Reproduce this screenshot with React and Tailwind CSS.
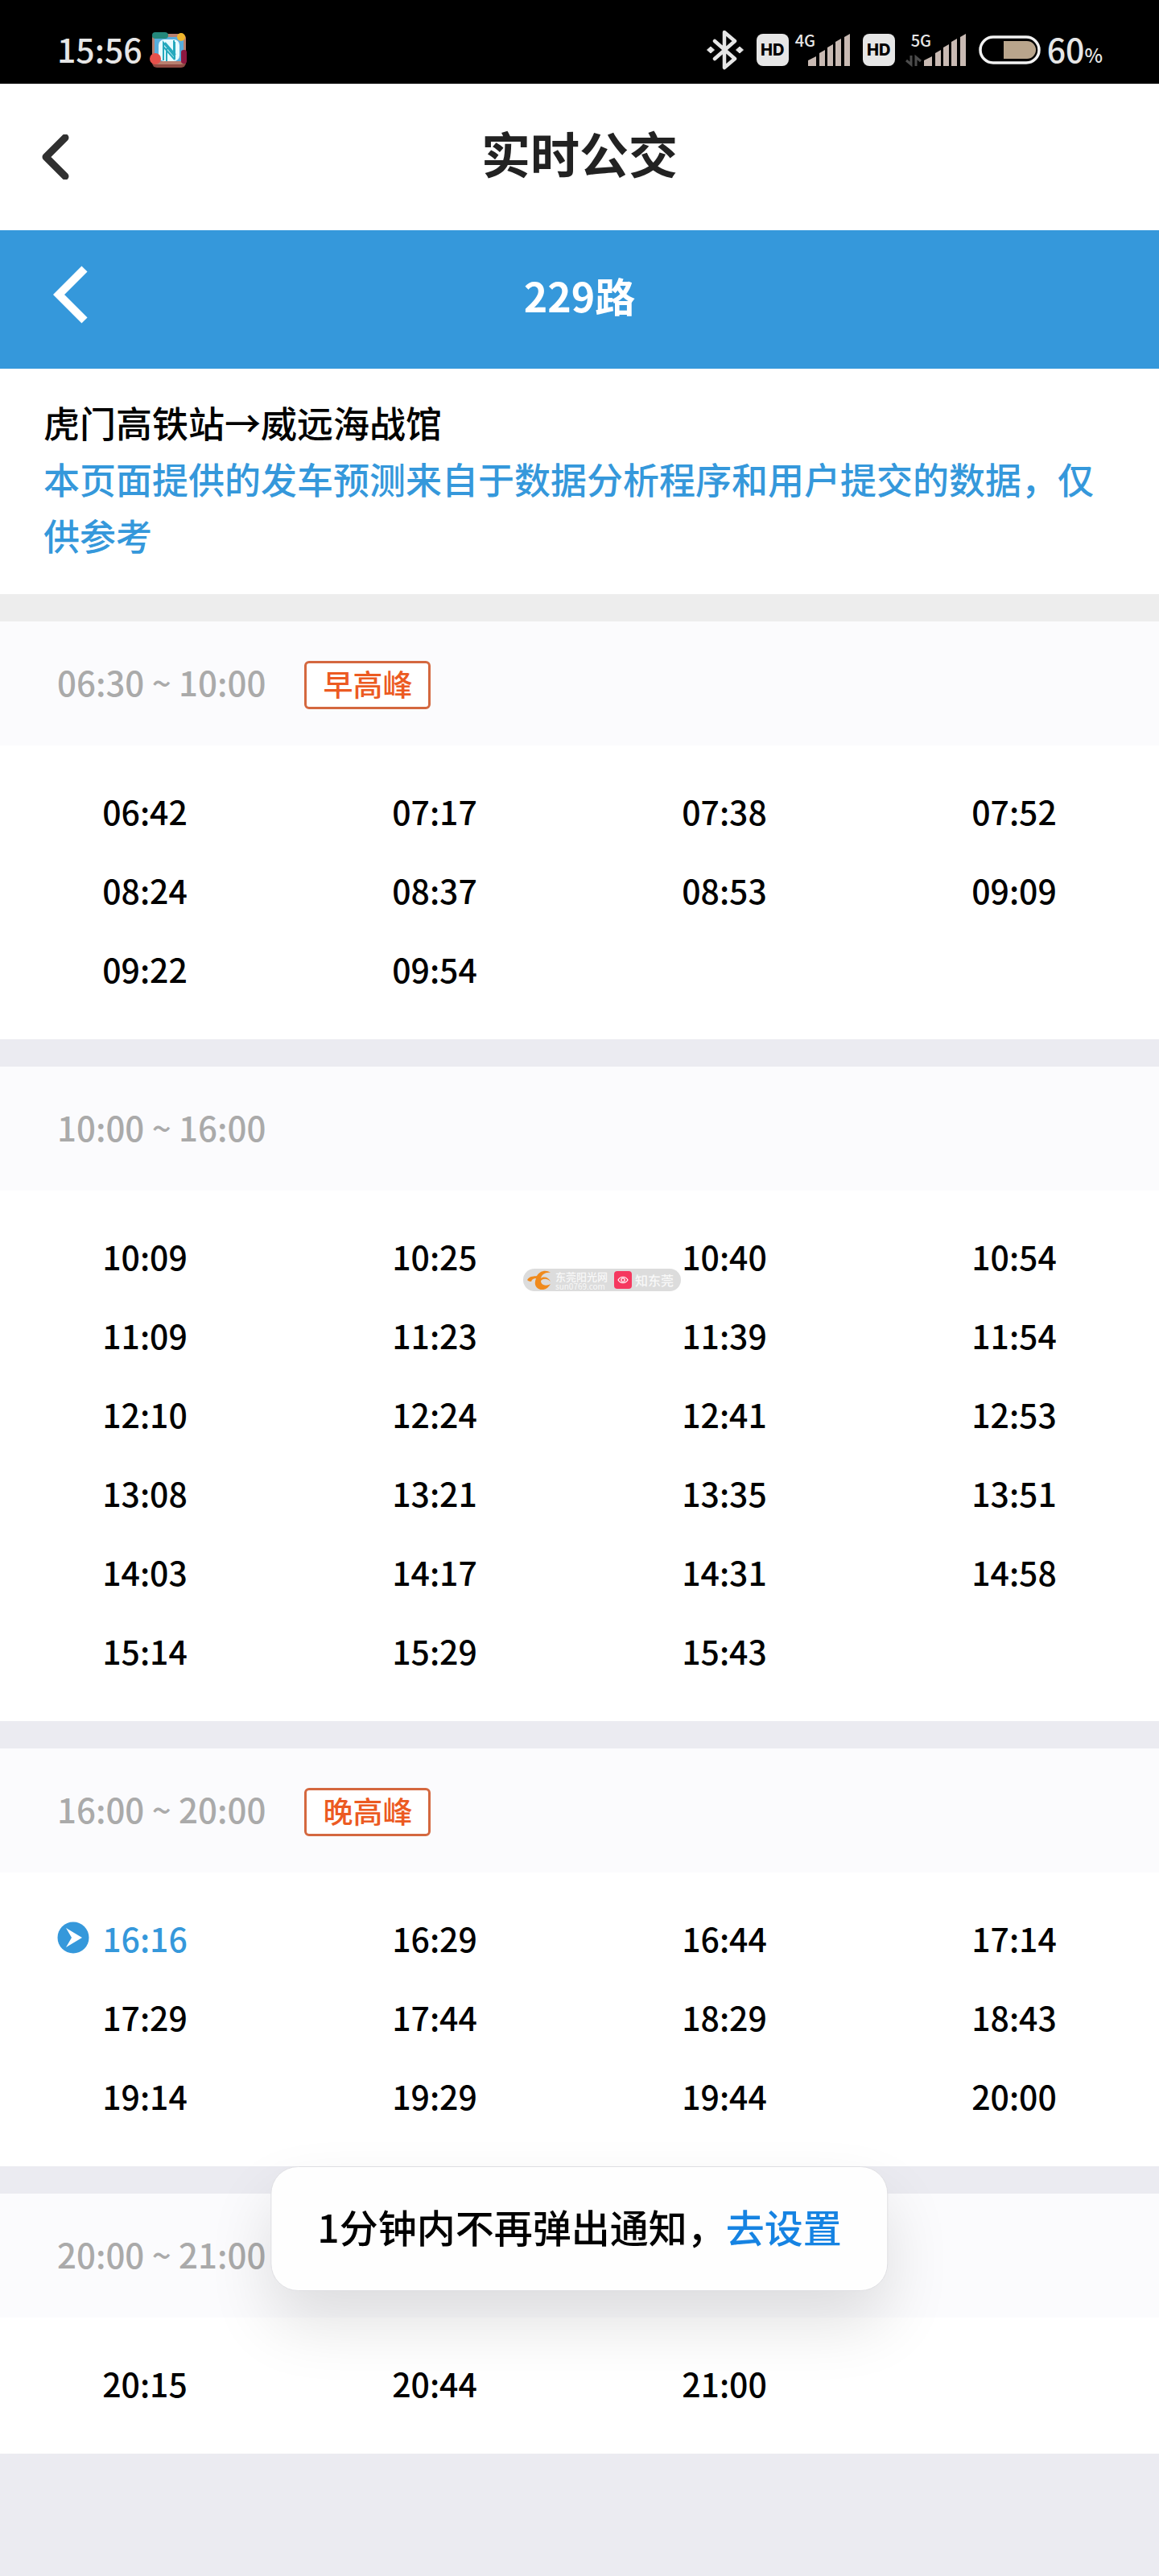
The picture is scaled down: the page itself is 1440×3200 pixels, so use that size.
import React from 'react';

// Timetable data, grouped by period of the day
const PERIODS = [
    {
        range: '06:30 ~ 10:00',
        tag: '早高峰',
        times: ['06:42', '07:17', '07:38', '07:52', '08:24', '08:37', '08:53', '09:09', '09:22', '09:54']
    },
    {
        range: '10:00 ~ 16:00',
        times: [
            '10:09', '10:25', '10:40', '10:54',
            '11:09', '11:23', '11:39', '11:54',
            '12:10', '12:24', '12:41', '12:53',
            '13:08', '13:21', '13:35', '13:51',
            '14:03', '14:17', '14:31', '14:58',
            '15:14', '15:29', '15:43'
        ]
    },
    {
        range: '16:00 ~ 20:00',
        tag: '晚高峰',
        times: [
            '16:16', '16:29', '16:44', '17:14',
            '17:29', '17:44', '18:29', '18:43',
            '19:14', '19:29', '19:44', '20:00'
        ]
    },
    {
        range: '20:00 ~ 21:00',
        times: ['20:15', '20:44', '21:00']
    }
];

const NEXT_BUS = '16:16';

// \uFF0C is the full-width comma
const NOTICE = '本页面提供的发车预测来自于数据分析程序和用户提交的数据\uFF0C仅供参考';
const TOAST_TEXT = '1分钟内不再弹出通知\uFF0C';

const NfcIcon = () => (
    <svg className="h-11 w-12" viewBox="0 0 48 44" aria-label="NFC">
        <rect x="4" y="2" width="42" height="42" rx="6" fill="#8f4a42" />
        <rect x="4" y="2" width="42" height="38" rx="6" fill="#b98070" />
        <rect x="7" y="6" width="36" height="30" rx="2" fill="#57aede" />
        <rect x="12" y="9" width="26" height="27" rx="7" fill="#e6fbff" />
        <path d="M18 35V13L31 29V10M20 13L33 28M18 18L32 34M32 34V12M22 36V20" fill="none" stroke="#25a9bd" strokeWidth="2" />
        <rect x="4" y="0" width="20" height="8" rx="4" fill="#23877b" />
        <circle cx="40" cy="6" r="5" fill="#f0b62c" />
        <rect x="40" y="22" width="7" height="17" rx="3" fill="#8d1740" />
        <circle cx="8" cy="33" r="7" fill="#e6504b" />
    </svg>
);

const BluetoothIcon = () => (
    <svg className="h-[50px] w-[46px]" viewBox="0 0 46 50" aria-label="蓝牙">
        <path d="M10 14L35 36L22 47V3L35 14L10 36" fill="none" stroke="#e6e6e6" strokeWidth="4.5" strokeLinecap="round" strokeLinejoin="round" />
        <path d="M5 21L9.500 25L5 29L.5 25ZM41 21L45.500 25L41 29L36.500 25Z" fill="#e6e6e6" stroke="#e6e6e6" strokeLinejoin="round" />
    </svg>
);

const HdBadge = () => (
    <span className="flex h-10 w-10 items-center justify-center rounded-lg bg-[#e6e6e6] font-['Inter',sans-serif] text-xl leading-none font-extrabold text-black">
        HD
    </span>
);

const Signal = ({ label, arrows }) => (
    <span className="relative h-10 w-[68px]">
        <span className="absolute -top-1 left-0 text-xl leading-6 font-medium">{label}</span>
        <svg className="h-10 w-[68px] overflow-visible" viewBox="0 0 68 40" aria-hidden="true">
            <path d="M16 40V33L26 28V40ZM30 40V24L37 20V40ZM40 40V17L47 13V40ZM50 40V10L57 6V40ZM61 40V4L68 0V40Z" fill="#c9bab3" />
            {arrows && (
                <path d="M-6 33L0 38V27M6 40V29L12 34" fill="none" stroke="#4c4c4c" strokeWidth="3" />
            )}
        </svg>
    </span>
);

const Battery = () => (
    <svg className="h-9 w-[77px]" viewBox="0 0 77 36" aria-label="电量">
        <rect x="2" y="2" width="73" height="32" rx="16" fill="none" stroke="#f2f2f2" strokeWidth="3.500" />
        <path d="M31 7H60A11 11 0 0 1 60 29H31Z" fill="#b9a58c" />
    </svg>
);

const StatusBar = () => (
    <div className="flex h-[104px] items-center bg-black pt-5 pr-[70px] pl-[71px] text-[41px] leading-none font-medium text-[#e6e6e6]">
        <span className="pb-1">15:56</span>
        <span className="ml-2">
            <NfcIcon />
        </span>
        <div className="ml-auto flex items-center gap-4">
            <BluetoothIcon />
            <HdBadge />
            <span className="-ml-2 flex">
                <Signal label="4G" />
            </span>
            <HdBadge />
            <span className="ml-1 flex">
                <Signal label="5G" arrows />
            </span>
            <Battery />
            <span className="-ml-2 flex items-baseline pb-1">
                60<span className="text-2xl leading-none">%</span>
            </span>
        </div>
    </div>
);

const PageHeader = () => (
    <header className="grid h-[182px] grid-cols-[1fr_auto_1fr] items-center bg-white">
        <button type="button" aria-label="返回" className="ml-[52px] justify-self-start">
            <svg className="h-14 w-[34px]" viewBox="0 0 34 56">
                <path d="M29 4L5 28L29 52" fill="none" stroke="#303030" strokeWidth="9" strokeLinecap="round" strokeLinejoin="round" />
            </svg>
        </button>
        <h1 className="pb-3 text-[61px] leading-none font-bold text-[#222]">实时公交</h1>
    </header>
);

const RouteBar = () => (
    <div className="grid h-[172px] grid-cols-[1fr_auto_1fr] items-center bg-[#3598db] text-white">
        <button type="button" aria-label="返回上一页" className="ml-[66px] justify-self-start pb-3">
            <svg className="h-[72px] w-11" viewBox="0 0 44 72">
                <path d="M39 4L7 36L39 68" fill="none" stroke="#fff" strokeWidth="10" />
            </svg>
        </button>
        <h2 className="pb-3 text-[50px] leading-none font-bold">229路</h2>
    </div>
);

const RouteInfo = () => (
    <div className="bg-white px-[54px] pt-8 pb-[38px] text-[45px] leading-[70px] font-medium">
        <p className="text-black">虎门高铁站→威远海战馆</p>
        <p className="text-[#3598db]">{NOTICE}</p>
    </div>
);

const NextIcon = () => (
    <svg className="absolute top-1/2 right-full mr-4 size-10 -translate-y-1/2" viewBox="0 0 40 40" aria-hidden="true">
        <circle cx="20" cy="20" r="19.500" fill="#3598db" />
        <path d="M11 8L31 20L11 32L18 20Z" fill="#fff" />
    </svg>
);

const Period = ({ range, tag, times }) => (
    <section>
        <div className="flex h-[154px] items-center gap-12 bg-[#fbfbfd] px-[71px]">
            <h3 className="pb-1 text-[42px] leading-none font-medium text-[#aaa]">{range}</h3>
            {tag && (
                <span className="mt-1 flex h-[60px] items-center rounded-md border-3 border-[#d4683f] bg-white px-5 pb-1 text-[37px] leading-none font-medium text-[#ec5a22]">
                    {tag}
                </span>
            )}
        </div>
        <ul className="grid grid-cols-4 bg-white pt-8 pb-[39px] text-center text-[41px] leading-[98px] font-medium text-black">
            {times.map(time => (
                <li key={time}>
                    {time === NEXT_BUS ? (
                        <span className="relative inline-block text-[#3598db]">
                            <NextIcon />
                            {time}
                        </span>
                    ) : (
                        time
                    )}
                </li>
            ))}
        </ul>
    </section>
);

const Watermark = () => (
    <div className="absolute top-[1576px] left-1/2 ml-[-70px] flex h-7 w-[196px] items-center rounded-full bg-[#dcdcdc] pl-1 whitespace-nowrap text-[#f8f8f8]">
        <svg className="h-6 w-8 shrink-0" viewBox="0 0 32 24" aria-hidden="true">
            <path d="M1 12C5 6 10 8 13 7C17 0 25 -1 30 3C24 2 19 5 18 10C22 7 28 9 30 14C26 10 21 10 18 13C18 19 25 20 30 17C27 23 20 26 15 23C10 20 10 15 12 10C9 10 7 11 6 14C4 14 2 13 1 12Z" fill="#f08a1c" />
        </svg>
        <span className="ml-1 flex w-[69px] shrink-0 flex-col">
            <span className="text-[13px] leading-4 font-medium">东莞阳光网</span>
            <span className="text-[10px] leading-2">sun0769.com</span>
        </span>
        <svg className="ml-1 size-[22px] shrink-0" viewBox="0 0 22 22" aria-hidden="true">
            <rect width="22" height="22" rx="4" fill="#f5385f" />
            <path d="M5 11C8 6 14 6 17 11C14 16 8 16 5 11Z" fill="none" stroke="#fff" strokeWidth="1.200" />
            <circle cx="11" cy="11" r="2.200" fill="none" stroke="#fff" strokeWidth="1.200" />
        </svg>
        <span className="ml-1 text-base leading-none font-medium">知东莞</span>
    </div>
);

const Toast = () => (
    <div className="fixed bottom-[354px] left-1/2 flex h-[155px] -translate-x-1/2 items-center rounded-[34px] border border-[#dedee2] bg-[#fefefe] px-[57px] pb-2 text-[48px] leading-none font-medium whitespace-nowrap text-black shadow-[0_40px_80px_rgba(0,0,0,0.12)]">
        <span>{TOAST_TEXT}</span>
        <a href="#settings" className="text-[#1683e2]">去设置</a>
    </div>
);

export default function App() {
    return (
        <div lang="zh-CN" className="relative min-h-screen bg-[#ebebf1] font-['Noto_Sans_CJK_SC',sans-serif]">
            <StatusBar />
            <PageHeader />
            <RouteBar />
            <RouteInfo />
            <div className="h-[34px] bg-[#ededed]" />
            <main className="flex flex-col gap-[34px]">
                {PERIODS.map(period => (
                    <Period key={period.range} {...period} />
                ))}
            </main>
            <Watermark />
            <Toast />
        </div>
    );
}
